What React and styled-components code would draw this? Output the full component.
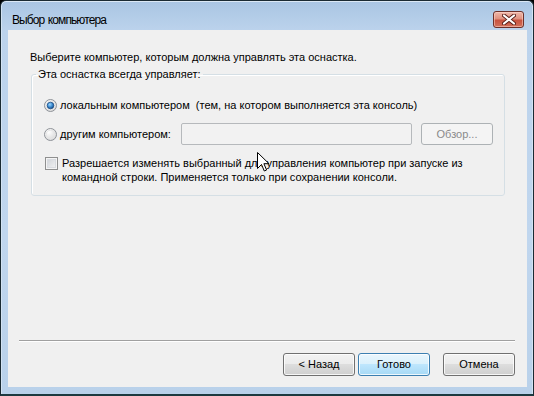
import React from "react";
import styled, { createGlobalStyle } from "styled-components";

const Global = createGlobalStyle`
  html, body { margin: 0; padding: 0; background: #000; }
  body { font-family: "Liberation Sans", Arial, sans-serif; font-size: 11px; }
  * { box-sizing: border-box; }
`;

const Window = styled.div`
  position: relative;
  width: 534px;
  height: 396px;
  border: 1px solid #1a2a33;
  border-bottom: 2px solid #1c3a40;
  border-radius: 6px 6px 0 0;
  background: linear-gradient(#a9c5e3 0px, #bcd3ec 30px, #c0d6ee 60%, #b9d1ea 100%);
  box-shadow: inset 0 1px 0 #dbe8f5, inset 1px 0 0 #d3e3f3, inset -1px 0 0 #d3e3f3;
  display: flex;
  flex-direction: column;
  overflow: hidden;
`;

const TitleBar = styled.div`
  height: 29px;
  flex: none;
  display: flex;
  align-items: center;
  justify-content: space-between;
  padding: 9px 9px 2px 11px;
`;

const Title = styled.div`
  font-size: 12px;
  letter-spacing: -0.9px;
  word-spacing: 1px;
  color: #000;
  line-height: 18px;
  margin-top: 1px;
`;

const CloseButton = styled.div`
  width: 31px;
  height: 17px;
  border: 1px solid #6d3029;
  border-radius: 3px;
  background: linear-gradient(#efb8ab 0%, #e0917f 45%, #c9533f 55%, #d2705a 100%);
  box-shadow: inset 0 0 0 1px rgba(255, 220, 210, 0.5);
  display: flex;
  align-items: center;
  justify-content: center;
`;

const Client = styled.div`
  flex: 1;
  margin: 0 6px 7px 7px;
  background: #f0f0f0;
  display: flex;
  flex-direction: column;
  padding-top: 20px;
  color: #000;
  line-height: 15px;
`;

const Intro = styled.div`
  padding-left: 22px;
  height: 17px;
`;

const Group = styled.fieldset`
  margin: 0 0 0 23px;
  width: 474px;
  border: 1px solid #d5dfe5;
  border-radius: 3px;
  box-shadow: inset 1px 1px 0 #fff;
  padding: 0 6px 11px 4px;
  display: flex;
  flex-direction: column;
`;

const Legend = styled.legend`
  padding: 0 2px;
  line-height: 15px;
  margin-left: 0;
`;

const Row = styled.div`
  display: flex;
  align-items: ${(p) => (p.$top ? "flex-start" : "center")};
  margin-top: ${(p) => p.$mt}px;
  margin-left: ${(p) => p.$ml || 8}px;
  height: ${(p) => (p.$h ? p.$h + "px" : "auto")};
`;

const RadioBox = styled.svg`
  flex: none;
  width: 13px;
  height: 13px;
  margin-right: 3px;
`;

const Label = styled.span`
  white-space: pre;
  width: ${(p) => (p.$w ? p.$w + "px" : "auto")};
  flex: none;
`;

const TextField = styled.div`
  width: 231px;
  height: 22px;
  border: 1px solid #b6b9bc;
  border-radius: 2px;
  background: #f2f2f2;
  flex: none;
`;

const Button = styled.div`
  width: ${(p) => p.$w || 72}px;
  height: ${(p) => p.$h || 23}px;
  margin-left: ${(p) => p.$ml || 0}px;
  flex: none;
  border: 1px solid ${(p) => (p.$disabled ? "#adb2b5" : p.$default ? "#3c7fb1" : "#707070")};
  border-radius: 3px;
  display: flex;
  align-items: center;
  justify-content: center;
  color: ${(p) => (p.$disabled ? "#8a8a8a" : "#000")};
  background: ${(p) =>
    p.$disabled
      ? "#f4f4f4"
      : p.$default
      ? "linear-gradient(#eaf6fd 0%, #d9f0fc 50%, #bee6fd 50%, #a7d9f5 100%)"
      : "linear-gradient(#f2f2f2 0%, #ebebeb 50%, #dddddd 50%, #cfcfcf 100%)"};
  box-shadow: ${(p) => (p.$disabled ? "none" : "inset 0 0 0 1px rgba(255,255,255,0.8)")};
`;

const CheckBox = styled.div`
  flex: none;
  width: 13px;
  height: 13px;
  margin-top: 1px;
  margin-right: 4px;
  border: 1px solid #8e8f8f;
  background: linear-gradient(135deg, #cbcfd5 0%, #f6f6f6 100%);
  box-shadow: inset 0 0 0 1px #f4f4f4, inset 0 0 0 2px #d8dbe0;
`;

const CheckText = styled.div`
  line-height: 14px;
`;

const Spacer = styled.div`
  flex: 1;
`;

const Separator = styled.div`
  height: 2px;
  margin: 0 12px 0 11px;
  border-top: 1px solid #a0a0a0;
  border-bottom: 1px solid #fff;
`;

const ButtonRow = styled.div`
  display: flex;
  justify-content: flex-end;
  padding-right: 12px;
  margin: 11px 0 11px;
`;

const Cursor = styled.svg`
  position: absolute;
  left: 256px;
  top: 151px;
  width: 13px;
  height: 21px;
`;

function Radio({ checked }) {
  return (
    <RadioBox viewBox="0 0 13 13">
      <defs>
        <radialGradient id={checked ? "rg1" : "rg0"} cx="0.35" cy="0.3" r="0.8">
          <stop offset="0" stopColor="#ffffff" />
          <stop offset="1" stopColor="#d4d4d4" />
        </radialGradient>
        <radialGradient id="dot" cx="0.4" cy="0.35" r="0.7">
          <stop offset="0" stopColor="#9fd8ff" />
          <stop offset="0.55" stopColor="#3a8ad0" />
          <stop offset="1" stopColor="#16447a" />
        </radialGradient>
      </defs>
      <circle cx="6.5" cy="6.5" r="6" fill={`url(#${checked ? "rg1" : "rg0"})`} stroke="#8f9399" strokeWidth="1" />
      <circle cx="6.5" cy="6.5" r="4.3" fill="none" stroke="#e6e6e6" strokeWidth="1" />
      {checked && <circle cx="6.5" cy="6.5" r="3.3" fill="url(#dot)" stroke="#1d4f87" strokeWidth="0.8" />}
    </RadioBox>
  );
}

export default function App() {
  return (
    <>
      <Global />
      <Window>
        <TitleBar>
          <Title>Выбор компьютера</Title>
          <CloseButton>
            <svg width="14" height="11" viewBox="0 0 14 11">
              <path d="M2 1.5 L12 9.5 M12 1.5 L2 9.5" stroke="#5a1f18" strokeWidth="4" strokeLinecap="round" />
              <path d="M2 1.5 L12 9.5 M12 1.5 L2 9.5" stroke="#ffffff" strokeWidth="2.2" strokeLinecap="round" />
            </svg>
          </CloseButton>
        </TitleBar>
        <Client>
          <Intro>Выберите компьютер, которым должна управлять эта оснастка.</Intro>
          <Group>
            <Legend>Эта оснастка всегда управляет:</Legend>
            <Row $mt={15} $h={16}>
              <Radio checked />
              <Label>локальным компьютером  (тем, на котором выполняется эта консоль)</Label>
            </Row>
            <Row $mt={10} $h={22}>
              <Radio />
              <Label $w={121}>другим компьютером:</Label>
              <TextField />
              <Button $disabled $ml={9} $h={22}>Обзор...</Button>
            </Row>
            <Row $mt={11} $ml={9} $top>
              <CheckBox />
              <CheckText>
                Разрешается изменять выбранный для управления компьютер при запуске из
                <br />
                командной строки. Применяется только при сохранении консоли.
              </CheckText>
            </Row>
          </Group>
          <Spacer />
          <Separator />
          <ButtonRow>
            <Button>&lt; Назад</Button>
            <Button $default $ml={3}>Готово</Button>
            <Button $ml={13}>Отмена</Button>
          </ButtonRow>
        </Client>
        <Cursor viewBox="0 0 13 21">
          <path d="M0.5 0.5 L0.5 16.5 L4.5 12.5 L7.3 19 L9.6 18 L6.9 11.7 L12 11.7 Z" fill="#fff" stroke="#000" strokeWidth="1" strokeLinejoin="miter" />
        </Cursor>
      </Window>
    </>
  );
}
